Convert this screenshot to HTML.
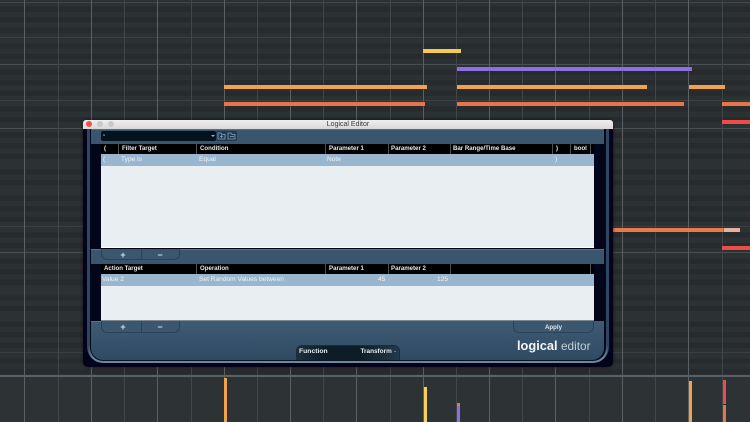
<!DOCTYPE html>
<html><head><meta charset="utf-8"><title>Logical Editor</title>
<style>
html,body{margin:0;padding:0;width:750px;height:422px;overflow:hidden;background:#2c3134}
body{position:relative;font-family:"Liberation Sans",sans-serif}
div,span,svg{position:absolute;display:block;box-sizing:border-box}
#a{left:0;top:0;width:750px;height:422px;overflow:hidden;filter:blur(.35px)}
#grid{left:0;top:0;width:750px;height:375px;
background:
repeating-linear-gradient(180deg,#2c3134 0 5.25px,#272b2e 5.25px 10.5px,#2c3134 10.5px 15.75px,#272b2e 15.75px 21px,#2c3134 21px 26.25px,#272b2e 26.25px 31.5px,#2c3134 31.5px 42px,#272b2e 42px 47.25px,#2c3134 47.25px 52.5px,#272b2e 52.5px 57.75px,#2c3134 57.75px 63px);
background-position:0 1.5px}
.hl{left:0;width:750px;height:1px}
.n{height:4px;box-shadow:0 0 0 .5px rgba(50,40,35,.55)}
.v{width:3px}
.t{white-space:nowrap;font-size:6.1px;line-height:10px;height:10px}
.h{color:#e8e8e8;font-weight:bold}
.r{color:#eef3f7;font-size:6.6px}
.sep{width:1px;background:#4a4f55;height:10px}
.btn{border:1px solid #2a4258;border-top:0;border-radius:0 0 6px 6px;background:#3b566f}
.pm{color:#d8e2ea;font-weight:bold;font-size:9px;line-height:10px;text-align:center;width:12px}
</style></head><body>
<div id="a">
<div id="grid"></div>
<div class="hl" style="top:2px;background:#43484b"></div>
<div class="hl" style="top:37px;background:#3a3f42"></div>
<div class="hl" style="top:64px;background:#4a4f52"></div>
<div class="hl" style="top:100px;background:#3a3f42"></div>
<div class="hl" style="top:128px;background:#4a4f52"></div>
<div class="hl" style="top:226px;background:#3a3f42"></div>
<div class="hl" style="top:252px;background:#4a4f52"></div>
<div class="hl" style="top:352px;background:#3a3f42"></div>
<div style="left:0;top:375px;width:750px;height:47px;background:#2d3235"></div>
<svg width="750" height="422" style="left:0;top:0" shape-rendering="crispEdges">
<g stroke="#5a6063" stroke-width="1"><path d="M24.5 0V422M91.5 0V422M157.5 0V422M224.5 0V422M290.5 0V422M356.5 0V422M423.5 0V422M489.5 0V422M555.5 0V422M622.5 0V422M688.5 0V422"/></g>
<g stroke="#40464a" stroke-width="1"><path d="M58.5 0V422M124.5 0V422M191.5 0V422M257.5 0V422M323.5 0V422M390.5 0V422M456.5 0V422M522.5 0V422M589.5 0V422M655.5 0V422M722.5 0V422"/></g>
</svg>
<div class="hl" style="top:375px;height:1.5px;background:#566067"></div>

<div class="n" style="left:423px;top:49px;width:38px;background:#f3cb58"></div>
<div class="n" style="left:457px;top:67px;width:235px;background:#8a70e2"></div>
<div class="n" style="left:224px;top:85px;width:203px;background:#f2a14e"></div>
<div class="n" style="left:457px;top:85px;width:190px;background:#f2a14e"></div>
<div class="n" style="left:689px;top:85px;width:36px;background:#f2a14e"></div>
<div class="n" style="left:224px;top:102px;width:201px;background:#e8744a"></div>
<div class="n" style="left:457px;top:102px;width:227px;background:#e8744a"></div>
<div class="n" style="left:722px;top:102px;width:28px;background:#e8744a"></div>
<div class="n" style="left:722px;top:120px;width:28px;background:#ef4b48"></div>
<div class="n" style="left:613px;top:228px;width:111px;background:#ea7a4a"></div>
<div class="n" style="left:724px;top:228px;width:16px;background:#e3b4a3"></div>
<div class="n" style="left:722px;top:246px;width:28px;background:#ef4b48"></div>

<div class="v" style="left:224px;top:378px;height:44px;background:#f2a14e"></div>
<div class="v" style="left:423.5px;top:387px;height:35px;background:#f5d257"></div>
<div class="v" style="left:457px;top:405px;height:17px;background:#8a70e2"></div>
<div class="v" style="left:457px;top:403px;height:3px;background:#e8744a"></div>
<div class="v" style="left:689px;top:381px;height:41px;background:#f2a14e"></div>
<div class="v" style="left:722.5px;top:380px;height:24px;background:#ef4b48"></div>
<div class="v" style="left:722.5px;top:405px;height:17px;background:#e8744a"></div>

<!-- window -->
<div style="left:83px;top:120px;width:530px;height:247px;background:#03041c;border-radius:4px 4px 5px 5px;box-shadow:0 0 3px rgba(0,0,0,.6)"></div>
<div style="left:83px;top:120px;width:530px;height:9px;background:linear-gradient(#efefef,#d8d8d8);border-radius:3px 3px 0 0"></div>
<div style="left:86px;top:121px;width:6px;height:6px;border-radius:50%;background:#f4504a"></div>
<div style="left:97px;top:121px;width:6px;height:6px;border-radius:50%;background:#c9c9c9"></div>
<div style="left:108px;top:121px;width:6px;height:6px;border-radius:50%;background:#c9c9c9"></div>
<div class="t" style="left:83px;top:120px;width:530px;text-align:center;color:#3a3a3a;font-size:7px;height:9px;line-height:9px">Logical Editor</div>

<!-- outer frame -->
<div style="left:87px;top:129px;width:522px;height:234px;border:solid #2c4760;border-width:0 3px 0 3px;border-radius:0 0 16px 16px;background:#0c1526"></div>
<div style="left:88px;top:345px;width:520px;height:18px;border:solid #70879b;border-width:0 2px 2px 2px;border-radius:0 0 15px 15px;-webkit-mask-image:linear-gradient(transparent,#000 70%);mask-image:linear-gradient(transparent,#000 70%)"></div>
<div style="left:90px;top:129px;width:516px;height:231px;background:#03061a;border-radius:0 0 13px 13px"></div>
<!-- toolbar panel -->
<div style="left:91px;top:129px;width:513px;height:15px;background:#3a556e;border-top:1px solid #566f86"></div>
<div style="left:101px;top:131px;width:115px;height:10px;background:#03121f;border-radius:2px"></div>
<div class="t" style="left:103px;top:131px;color:#e0e0e0;font-weight:bold">-</div>
<div style="left:211px;top:135px;width:0;height:0;border:2px solid transparent;border-top:2px solid #9fb2c2"></div>
<div style="left:216px;top:131px;width:21px;height:10px;background:#1f3a50;border-radius:2px"></div>
<svg width="20" height="8" style="left:217px;top:132px" fill="none" stroke="#8ba2b6" stroke-width=".8"><path d="M1 1H4L5 2.5H8V7H1Z"/><path d="M3 4.5H6M4.5 3V6"/><path d="M11 1H14L15 2.5H18V7H11Z"/><path d="M13 4.5H17"/></svg>

<!-- filter table -->
<div style="left:101px;top:144px;width:493px;height:10px;background:#000"></div>
<div class="t h" style="left:104px;top:144px">(</div>
<div class="sep" style="left:118px;top:144px"></div>
<div class="t h" style="left:122px;top:144px">Filter Target</div>
<div class="sep" style="left:196px;top:144px"></div>
<div class="t h" style="left:200px;top:144px">Condition</div>
<div class="sep" style="left:325px;top:144px"></div>
<div class="t h" style="left:329px;top:144px">Parameter 1</div>
<div class="sep" style="left:388px;top:144px"></div>
<div class="t h" style="left:391px;top:144px">Parameter 2</div>
<div class="sep" style="left:450px;top:144px"></div>
<div class="t h" style="left:453px;top:144px">Bar Range/Time Base</div>
<div class="sep" style="left:552px;top:144px"></div>
<div class="t h" style="left:556px;top:144px">)</div>
<div class="sep" style="left:570px;top:144px"></div>
<div class="t h" style="left:574px;top:144px">bool</div>
<div class="sep" style="left:590px;top:144px"></div>
<div style="left:101px;top:154px;width:493px;height:12px;background:#9ab6cf"></div>
<div class="t r" style="left:103px;top:155px">(</div>
<div class="t r" style="left:121px;top:155px">Type is</div>
<div class="t r" style="left:199px;top:155px">Equal</div>
<div class="t r" style="left:327px;top:155px">Note</div>
<div class="t r" style="left:555px;top:155px">)</div>
<div style="left:101px;top:166px;width:493px;height:82px;background:#e9eef2;border-bottom:1px solid #fff"></div>

<!-- middle strip -->
<div style="left:91px;top:249px;width:513px;height:15px;background:#3a556e;border-top:1px solid #5a7186"></div>
<div class="btn" style="left:101px;top:249px;width:79px;height:11px"></div>
<div style="left:141px;top:249px;width:1px;height:11px;background:#2a4258"></div>
<div class="pm" style="left:117px;top:250px">+</div>
<div class="pm" style="left:154px;top:250px">−</div>

<!-- action table -->
<div style="left:101px;top:264px;width:493px;height:10px;background:#000"></div>
<div class="t h" style="left:104px;top:264px">Action Target</div>
<div class="sep" style="left:196px;top:264px"></div>
<div class="t h" style="left:200px;top:264px">Operation</div>
<div class="sep" style="left:325px;top:264px"></div>
<div class="t h" style="left:329px;top:264px">Parameter 1</div>
<div class="sep" style="left:388px;top:264px"></div>
<div class="t h" style="left:391px;top:264px">Parameter 2</div>
<div class="sep" style="left:450px;top:264px"></div>
<div class="sep" style="left:590px;top:264px"></div>
<div style="left:101px;top:274px;width:493px;height:12px;background:#9ab6cf"></div>
<div class="t r" style="left:102px;top:275px">Value 2</div>
<div class="t r" style="left:199px;top:275px">Set Random Values between</div>
<div class="t r" style="left:378px;top:275px">45</div>
<div class="t r" style="left:437px;top:275px">125</div>
<div style="left:101px;top:286px;width:493px;height:35px;background:#e9eef2;border-bottom:1px solid #7f8a94"></div>

<!-- bottom panel -->
<div style="left:91px;top:321px;width:513px;height:39px;background:linear-gradient(#3f5b75,#2f4a62);border-radius:0 0 12px 12px"></div>
<div style="left:91px;top:321px;width:10px;height:1px;background:#5a7186"></div>
<div class="btn" style="left:101px;top:321px;width:79px;height:12px"></div>
<div style="left:141px;top:321px;width:1px;height:12px;background:#2a4258"></div>
<div class="pm" style="left:117px;top:322px">+</div>
<div class="pm" style="left:154px;top:322px">−</div>
<div class="btn" style="left:513px;top:321px;width:81px;height:12px"></div>
<div class="t" style="left:513px;top:323px;width:81px;text-align:center;color:#dfe8ef;font-weight:bold">Apply</div>
<div style="left:296px;top:345px;width:104px;height:15px;background:linear-gradient(90deg,#1a2f3f,#0d1c26 30%,#0d1c26 60%,#23394b);border:1px solid #1b2c3c;border-bottom:0;border-radius:6px 6px 0 0"></div>
<div class="t" style="left:299px;top:347px;font-size:6.8px;font-weight:bold;color:#e8edf0">Function</div>
<div class="t" style="left:360.5px;top:347px;font-size:6.4px;font-weight:bold;color:#e8edf0">Transform</div>
<div style="left:394px;top:351px;width:0;height:0;border:1.5px solid transparent;border-top:1.5px solid #b8c6d2"></div>
<div class="t" style="left:517px;top:338px;font-size:12.8px;font-weight:bold;color:#f2f4f6;height:16px;line-height:16px">logical</div>
<div class="t" style="left:561px;top:338px;font-size:11.8px;color:#c3cfda;height:16px;line-height:16px">editor</div>
</div>
</body></html>
